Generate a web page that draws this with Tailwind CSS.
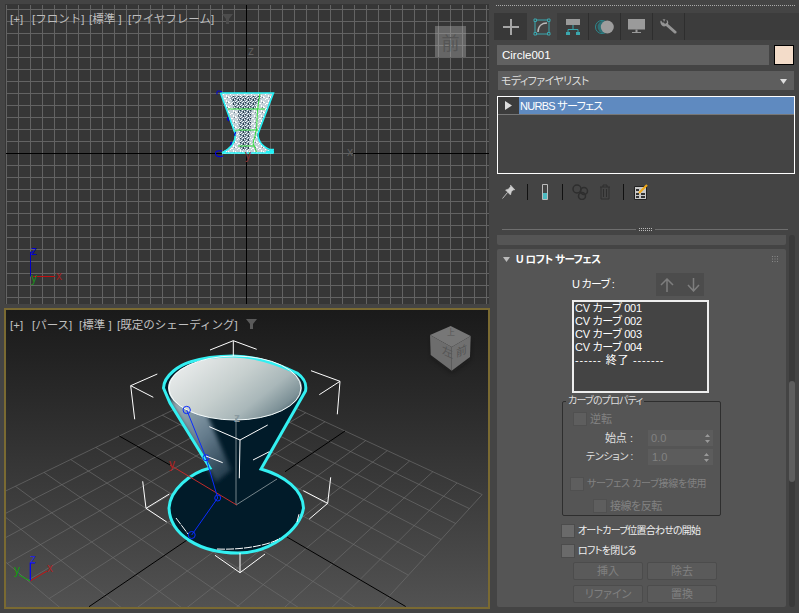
<!DOCTYPE html>
<html><head><meta charset="utf-8"><script src="https://cdn.jsdelivr.net/npm/@tailwindcss/browser@4"></script></head>
<body class="m-0 w-[799px] h-[613px] overflow-hidden bg-[#444444] font-['Liberation_Sans','Noto_Sans_CJK_JP',sans-serif] text-[11px] leading-none text-white">
<div class="flex w-[799px] h-[613px]">
  <!-- viewports -->
  <div class="w-[496px] flex flex-col pl-[4px] pt-[4px]">
    <div class="relative w-[484px] h-[300px] ml-[1px] bg-[#363636] overflow-hidden">
      <svg class="absolute inset-0" width="484" height="300" viewBox="5 4 484 300">
        <defs>
          <pattern id="g" x="6" y="9" width="12" height="12" patternUnits="userSpaceOnUse"><path d="M0 .5H12M.5 0V12" stroke="#636363" fill="none"/></pattern>
          <pattern id="n" x="222" y="94" width="7" height="5" patternUnits="userSpaceOnUse"><rect width="7" height="5" fill="#c3d0d7"/><path d="M1 0h1v1H1zM4 1h1v2H4zM0 3h1v1H0zM6 2h1v2H6zM2 4h2v1H2z" fill="#fff"/><path d="M5 3h1v1H5z" fill="#6d8090"/></pattern>
          <pattern id="d" x="236" y="94" width="5" height="4" patternUnits="userSpaceOnUse"><rect width="5" height="4" fill="#7f94a3"/><path d="M1 0h1v1H1zM3 1h1v1H3zM0 2h1v1H0zM4 3h1v1H4zM2 3h1v1H2z" fill="#f4f8fa"/><path d="M2 1h1v2H2zM4 0h1v1H4z" fill="#243848"/></pattern>
        </defs>
        <rect x="6" y="5" width="483" height="299" fill="url(#g)"/>
        <path d="M246.500 5V304M6 153.500H222M353 153.500H489" stroke="#000"/>
        <path d="M221 93H273L257 135Q259 146 273 152V154H222V152Q235 146 235 135Z" fill="url(#n)"/>
        <path d="M230 96H262L254 109H234ZM238 109H252L249 150H240Z" fill="url(#d)"/>
        <path d="M228 109H265M236.500 130H258M238 146H255M260 93L257.500 110L256.500 130L253 143L256.500 152M236 130L235 138" stroke="#22e02c" stroke-width=".9" fill="none"/>
        <path d="M220.500 93H273.500L258 134Q258 146 273.500 151M220.500 93L235 133Q237 145 222 153H274M274 151.500H266M274 149.500H269" stroke="#22f4f8" stroke-width="1.500" fill="none"/>
        <path d="M222 92Q216 89 217 94.500M222 151Q215 150 215.500 154Q217 158 223 156M228 117q-1 3 1 4M236 132q-2 2-1 4M232 142q-2 1-1 3" stroke="#0000e0" stroke-width="1.100" fill="none"/>
        <path d="M30.500 276.500V252H34" stroke="#0000c8" fill="none"/>
        <path d="M32 276.500H55" stroke="#c01010" fill="none"/>
      </svg>
      <div class="absolute left-[5px] top-[10px] flex text-[#bdbdbd] text-[11.500px] whitespace-nowrap"><span class="w-[22px]">[+]</span><span class="w-[57px]">[フロント]</span><span class="w-[39px]">[標準 ]</span><span>[ワイヤフレーム]</span></div>
      <svg class="absolute left-[216px] top-[9px]" width="13" height="12" viewBox="0 0 13 12"><path d="M1 1H12L8 6V11H5V6Z" fill="#4c4c4c"/></svg>
      <span class="absolute left-[243px] top-[41px] text-[12px] text-[#5e5e5e]">z</span>
      <span class="absolute left-[342px] top-[142px] text-[12px] text-[#5e5e5e]">x</span>
      <span class="absolute left-[240px] top-[145px] text-[12px] text-[#8a3030]">y</span>
      <span class="absolute left-[26px] top-[241px] text-[12px] text-[#0000cc]">z</span>
      <span class="absolute left-[51px] top-[266px] text-[12px] text-[#a02020]">x</span>
      <span class="absolute left-[26px] top-[268px] text-[12px] text-[#1f8a1f]">y</span>
      <div class="absolute left-[430px] top-[22px] w-[31px] h-[31px] bg-[#b0b0b0]/40 flex items-center justify-center text-[18px] text-[#555555] font-['Noto_Sans_CJK_JP']">前</div>
    </div>
    <div class="relative w-[486px] h-[301px] mt-[4px] border-2 border-[#7a6a32] bg-gradient-to-b from-[#1a1a1a] to-[#525252] overflow-hidden">
      <svg class="absolute inset-0" width="482" height="297" viewBox="6 310 482 297">
        <path id="floor" d="" stroke="#6e6e6e" stroke-opacity=".65" fill="none"/>
        <path d="M119.300 436L170 465M287 537L405.700 606.500M89 606.700L190 538M285 471.700L345 431" stroke="#000" fill="none"/>
        <defs>
          <linearGradient id="b" x1="0" x2="1" y1=".2" y2=".8"><stop offset="0" stop-color="#eceeee"/><stop offset=".45" stop-color="#c6cfce"/><stop offset=".7" stop-color="#a9b7b9"/><stop offset=".88" stop-color="#7d9197"/><stop offset="1" stop-color="#3f5a66"/></linearGradient>
          <linearGradient id="s" x1="0" x2=".7" y1="0" y2="1"><stop offset="0" stop-color="#a9bcc3"/><stop offset=".6" stop-color="#62798a"/><stop offset="1" stop-color="#2a4252"/></linearGradient>
          <filter id="f"><feGaussianBlur stdDeviation="2"/></filter>
          <clipPath id="c"><path d="M163.500 388C164 375 180 365 190 362C205 357 220 356 233 356C255 356 280 365 297 373C304 378 307 383 305.500 391L261 469C285 476 303 490 303.500 508C300 530 270 553 238 553C200 553 170 535 169 508C170 490 190 473 210 468L170 403Z"/></clipPath>
        </defs>
        <path d="M163.500 388C164 375 180 365 190 362C205 357 220 356 233 356C255 356 280 365 297 373C304 378 307 383 305.500 391L261 469C285 476 303 490 303.500 508C300 530 270 553 238 553C200 553 170 535 169 508C170 490 190 473 210 468L170 403Z" fill="#011b29"/>
        <g clip-path="url(#c)"><path d="M168 398L207 414L231 470L216 482Z" fill="url(#s)" filter="url(#f)"/></g>
        <ellipse cx="235" cy="388" rx="67" ry="32" fill="url(#b)"/>
        <path d="M163.500 388C164 375 180 365 190 362C205 357 220 356 233 356C255 356 280 365 297 373C304 378 307 383 305.500 391L261 469C285 476 303 490 303.500 508C300 530 270 553 238 553C200 553 170 535 169 508C170 490 190 473 210 468L170 403Z" fill="none" stroke="#33f0f2" stroke-width="3"/>
        <ellipse cx="235" cy="388" rx="66" ry="32" fill="none" stroke="#f4fbfb" stroke-width="1"/>
        <path d="M236 418V505L277 479" stroke="#75848a" fill="none"/>
        <path d="M236.700 505L170 465" stroke="#c02a2a" fill="none"/>
        <path d="M186.700 410L206 457.700L217.700 498L191.700 535" stroke="#0a2cff" fill="none"/>
        <circle cx="186.700" cy="410" r="3.700" fill="none" stroke="#0a2cff"/><circle cx="206" cy="457.700" r="3" fill="none" stroke="#0a2cff"/><circle cx="217.700" cy="498" r="3" fill="none" stroke="#0a2cff"/><circle cx="191.700" cy="535" r="3.500" fill="none" stroke="#0a2cff"/>
        <g stroke="#fff" fill="none" stroke-width="1">
          <path d="M210 350L233.300 340.700L256.700 349.300M233.300 340.700V356"/>
          <path d="M157.300 374L130.700 385.700L153.300 397.300M130.700 385.700L134.700 419.300"/>
          <path d="M311 370.700L340 381.300L319.300 394.700M340 381.300L337.300 414.300"/>
          <path d="M209.300 426.700L240 440L267.700 425M240 440L239.300 478.300"/>
          <path d="M253 460L269.300 451.700M206 456L222.700 462.700"/>
          <path d="M142.700 481.300L146 508.300L166.700 522M146 508.300L169.300 494"/>
          <path d="M330.700 477.300L327.700 503.300L309.300 519M327.700 503.300L303.300 490.700"/>
          <path d="M215 555.300L240 572.700L265 554M240 572.700V553"/>
          <path d="M176 518L188 534M217 549Q240 550 262 545Q275 542 280 538M297 522L299 514" stroke-dasharray="8 1"/>
        </g>
        <path d="M30.300 581V563H35" stroke="#0000ff" stroke-width="1.200" fill="none"/>
        <path d="M30.300 581L47 571" stroke="#cc1111" fill="none"/>
        <path d="M30.300 581L19 575" stroke="#11aa11" fill="none"/>
        <defs><filter id="sh"><feGaussianBlur stdDeviation="2.500"/></filter></defs>
        <path d="M431 338L452 350L471 340L470 360L452 373L432 358Z" fill="#111" opacity=".35" filter="url(#sh)"/>
        <path d="M430 335L450.700 326L470.700 336L451.700 347Z" fill="#777777"/>
        <path d="M430 335L451.700 347V370.700L430.700 355Z" fill="#6d6d6d"/>
        <path d="M470.700 336L451.700 347V370.700L470 357Z" fill="#707070"/>
      </svg>
      <div class="absolute left-[4px] top-[10px] flex text-[#c0c0c0] text-[11.500px] whitespace-nowrap"><span class="w-[22px]">[+]</span><span class="w-[47px]">[パース]</span><span class="w-[38px]">[標準 ]</span><span>[既定のシェーディング]</span></div>
      <svg class="absolute left-[239px] top-[8px]" width="13" height="12" viewBox="0 0 13 12"><path d="M1 1H12L8 6V11H5V6Z" fill="#5a5a5a"/></svg>
      <span class="absolute left-[24px] top-[243px] text-[12px] text-[#2222dd]">z</span>
      <span class="absolute left-[41px] top-[252px] text-[12px] text-[#aa2222]">x</span>
      <span class="absolute left-[8px] top-[254px] text-[12px] text-[#119911]">y</span>
      <span class="absolute left-[163px] top-[148px] text-[12px] text-[#aa2222]">y</span>
      <span class="absolute left-[228px] top-[102px] text-[12px] font-bold text-[#8a9aa0]">z</span>
      <span class="absolute left-[436px] top-[36px] text-[11px] text-[#555555] font-['Noto_Sans_CJK_JP'] skew-y-[25deg]">左</span>
      <span class="absolute left-[450px] top-[35px] text-[11px] text-[#555555] font-['Noto_Sans_CJK_JP'] skew-y-[-25deg]">前</span>
      <span class="absolute left-[441px] top-[18px] text-[8px] text-[#555555] font-['Noto_Sans_CJK_JP']">上</span>
    </div>
  </div>
  <!-- command panel -->
  <div class="w-[303px] flex flex-col [font-feature-settings:'palt']">
    <div class="h-[1px] mt-[5px] w-[299px] border-t border-dotted border-[#aaaaaa]"></div>
    <div class="flex h-[27px] mt-[7px] ml-[-2px] w-[305px] bg-[#3c3c3c]">
      <div class="w-[33px] flex items-center justify-center bg-[#383838]"><svg width="18" height="18" viewBox="0 0 18 18"><path d="M9 1V17M1 9H17" stroke="#a6a6a6" stroke-width="2"/></svg></div>
      <div class="w-[30px] flex items-center justify-center bg-[#444444]"><svg width="18" height="18" viewBox="0 0 18 18"><path d="M2 2H16V16H2Z" fill="none" stroke="#3aa7ae" stroke-width="1"/><path d="M1 1h2.500v2.500H1zM14.500 1H17v2.500h-2.500zM1 14.500h2.500V17H1zM14.500 14.500H17V17h-2.500z" fill="#444" stroke="#3aa7ae"/><path d="M5 14C5 8 9 5 14 5" stroke="#bbbbbb" stroke-width="1.500" fill="none"/></svg></div>
      <div class="w-[32px] flex items-center justify-center border-r border-[#2e2e2e]"><svg width="14" height="16" viewBox="0 0 14 16"><path d="M0 0H14V6H0Z" fill="#9a9a9a"/><path d="M7 6V10M2 14V10.500H12V14" stroke="#3aa7ae" fill="none"/><path d="M0 13H4V16H0zM10 13H14V16H10z" fill="#3aa7ae"/></svg></div>
      <div class="w-[32px] flex items-center justify-center border-r border-[#2e2e2e]"><svg width="19" height="14" viewBox="0 0 19 14"><circle cx="7" cy="7" r="6.500" fill="none" stroke="#2c8c92"/><circle cx="9" cy="7" r="6.500" fill="#2e6f74"/><circle cx="12.300" cy="7" r="6.500" fill="#9d9d9d"/></svg></div>
      <div class="w-[32px] flex items-center justify-center border-r border-[#2e2e2e]"><svg width="17" height="15" viewBox="0 0 17 15"><path d="M0 0H17V10.500H0Z" fill="#9a9a9a"/><path d="M7.500 10.500H9.500V13H7.500Z" fill="#9a9a9a"/><path d="M4 13.500H13" stroke="#9a9a9a"/></svg></div>
      <div class="w-[32px] flex items-center justify-center border-r border-[#2e2e2e]"><svg width="17" height="15" viewBox="0 0 17 15"><path d="M5.500 0.500L3.500 3L5 5L7 3.500L6.500 0.800Q9 2 8 5L16.500 12.500Q17 15 14.500 14.500L6 7Q2 8.500 0.500 4Q0 2 1 1.500L3 4L4.500 2.500L2.500 0.500Q4 -.2 5.500 .5Z" fill="#949494"/></svg></div>
    </div>
    <div class="flex mt-[5px] gap-[5px] pl-[1px]">
      <div class="w-[272px] h-[20px] bg-[#616161] flex items-center pl-[5px] pt-[1px] text-[11.500px]">Circle001</div>
      <div class="w-[20px] h-[20px] bg-[#f3dcc9] border border-black"></div>
    </div>
    <div class="w-[296px] h-[19px] ml-[2px] mt-[6px] bg-[#5e5e5e] flex items-center justify-between pl-[3px] pr-[7px] pt-[1px] text-[#dddddd]"><span class="tracking-[-0.600px]">モディファイヤリスト</span><svg width="7" height="5" viewBox="0 0 7 5"><path d="M0 0H7L3.500 5Z" fill="#dddddd"/></svg></div>
    <div class="w-[298px] h-[78px] ml-[1px] mt-[6px] border border-white bg-[#444444]">
      <div class="flex h-[18px] border-b border-[#777777]"><div class="w-[21px] bg-[#3c3c3c] flex items-center justify-center"><svg width="7" height="9" viewBox="0 0 7 9"><path d="M0 0L7 4.500L0 9Z" fill="#dddddd"/></svg></div><div class="flex-1 bg-[#5f8ac0] flex items-center pl-[1px] pt-[1px] tracking-[-0.700px]">NURBS サーフェス</div></div>
    </div>
    <div class="flex items-center h-[17px] mt-[9px] pl-[6px]">
      <svg width="14" height="15" viewBox="0 0 14 15"><path d="M0.500 14.500L5.500 8.500" stroke="#bbbbbb"/><path d="M3.500 6L8.500 11L9.500 7.500L12 5.500L13 6L8.500 1L8.500 2.500L6.500 5Z" fill="#cfcfcf" stroke="#cfcfcf" stroke-width=".5"/></svg>
      <div class="w-[1px] h-[16px] bg-[#111111] ml-[11px]"></div>
      <svg class="ml-[13px]" width="8" height="16" viewBox="0 0 8 16"><path d="M1.500 .5H6.500V15.500H1.500Z" fill="none" stroke="#bdbdbd"/><path d="M2 9H6V15H2Z" fill="#4dbac0"/></svg>
      <div class="w-[1px] h-[16px] bg-[#111111] ml-[13px]"></div>
      <svg class="ml-[9px]" width="17" height="16" viewBox="0 0 17 16"><circle cx="5" cy="5" r="4" fill="none" stroke="#2e2e2e" stroke-width="1.500"/><circle cx="12" cy="7" r="3.500" fill="none" stroke="#2e2e2e" stroke-width="1.500"/><circle cx="10" cy="12" r="3.500" fill="none" stroke="#2e2e2e" stroke-width="1.500"/></svg>
      <svg class="ml-[10px]" width="12" height="16" viewBox="0 0 12 16"><path d="M1 3H11M4 3V1H8V3M2 3V15H10V3M4.500 5V13M7.500 5V13" stroke="#2e2e2e" fill="none"/></svg>
      <div class="w-[1px] h-[16px] bg-[#111111] ml-[12px]"></div>
      <svg class="ml-[10px]" width="15" height="16" viewBox="0 0 15 16"><path d="M.5 2.500H12.500V15.500H.5Z" fill="#c8c8c8" stroke="#222222"/><path d="M2 5H5V7H2ZM2 9H5V11H2ZM7 9H11V11H7ZM2 12H5V14H2ZM7 12H11V14H7Z" fill="#333333"/><path d="M5 9L13 1" stroke="#f0a818" stroke-width="2.200"/></svg>
    </div>
    <div class="flex items-center h-[4px] mt-[27px] pl-[6px]"><div class="w-[134px] h-[1px] bg-[#6e6e6e]"></div><div class="w-[13px] mx-[3px] border-t border-b border-dotted border-[#bbbbbb] h-[3px]"></div><div class="w-[133px] h-[1px] bg-[#6e6e6e]"></div></div>
    <div class="flex flex-1 mt-[4px] pr-[4px] gap-[3px] mb-[6px]">
      <div class="w-[289px] ml-[1px] flex flex-col gap-[4px]">
        <div class="h-[10px] bg-[#555555] rounded-b-[2px]"></div>
        <div class="flex-1 bg-[#555555] rounded-[2px] relative flex flex-col items-start">
          <div class="flex items-center h-[20px] w-full pl-[6px] font-bold text-[10.500px] tracking-[-0.500px]">
            <svg class="mr-[6px]" width="7" height="5" viewBox="0 0 7 5"><path d="M0 0H7L3.500 5Z" fill="#bbbbbb"/></svg>U ロフト サーフェス
            <svg class="ml-auto mr-[8px]" width="6" height="6" viewBox="0 0 6 6"><path d="M0 0h1v1H0zM2.500 0h1v1h-1zM5 0h1v1H5zM0 2.500h1v1H0zM2.500 2.500h1v1h-1zM5 2.500h1v1H5zM0 5h1v1H0zM2.500 5h1v1h-1zM5 5h1v1H5z" fill="#888888"/></svg>
          </div>
          <div class="flex items-center ml-[75px] mt-[4px]">
            <span class="w-[84px] text-[11px] tracking-[-0.700px]">U カーブ :</span>
            <div class="w-[48px] h-[23px] bg-[#4c4c4c] flex items-center justify-between px-[4px]">
              <svg width="14" height="14" viewBox="0 0 14 14"><path d="M7 14V1M1 7L7 1L13 7" stroke="#7e7e7e" stroke-width="1.500" fill="none"/></svg>
              <svg width="13" height="14" viewBox="0 0 13 14"><path d="M6.500 0V13M1 7L6.500 13L12 7" stroke="#7e7e7e" stroke-width="1.500" fill="none"/></svg>
            </div>
          </div>
          <div class="w-[137px] h-[93px] ml-[75px] mt-[4px] border-2 border-[#eeeeee] bg-[#444444] pl-[1px] text-[11px] leading-[13px] tracking-[-0.300px]">
            <div>CV カーブ 001</div><div>CV カーブ 002</div><div>CV カーブ 003</div><div>CV カーブ 004</div><div class="tracking-[0.800px]">------ 終了 -------</div>
          </div>
          <div class="relative w-[159px] h-[115px] ml-[65px] mt-[8px] border border-[#2e2e2e] rounded-[2px] text-[#828282] whitespace-nowrap">
            <span class="absolute left-[3px] top-[-6px] bg-[#555555] px-[2px] text-[#dddddd] text-[10px] tracking-[-0.800px]">カーブのプロパティ</span>
            <div class="flex items-center absolute left-[10px] top-[10px]"><div class="w-[14px] h-[14px] bg-[#5e5e5e] border border-[#505050] mr-[3px]"></div>逆転</div>
            <div class="flex items-center absolute right-[7px] top-[28px]"><span class="text-[#e0e0e0] mr-[15px]">始点 :</span><div class="w-[65px] h-[16px] bg-[#5c5c5c] flex items-center justify-between px-[3px]">0.0<svg width="5" height="9" viewBox="0 0 5 9"><path d="M2.500 0L5 3H0ZM2.500 9L5 6H0Z" fill="#999999"/></svg></div></div>
            <div class="flex items-center absolute right-[7px] top-[47px]"><span class="text-[#e0e0e0] mr-[15px] text-[10px] tracking-[-0.300px]">テンション :</span><div class="w-[65px] h-[16px] bg-[#5c5c5c] flex items-center justify-between px-[4px]">1.0<svg width="5" height="9" viewBox="0 0 5 9"><path d="M2.500 0L5 3H0ZM2.500 9L5 6H0Z" fill="#999999"/></svg></div></div>
            <div class="flex items-center absolute left-[7px] top-[75px]"><div class="w-[14px] h-[14px] bg-[#5e5e5e] border border-[#505050] mr-[3px]"></div><span class="text-[10px] tracking-[-0.300px]">サーフェス カーブ接線を使用</span></div>
            <div class="flex items-center absolute left-[30px] top-[97px]"><div class="w-[14px] h-[14px] bg-[#5e5e5e] border border-[#505050] mr-[3px]"></div><span class="tracking-[-0.500px]">接線を反転</span></div>
          </div>
          <div class="flex items-center ml-[64px] mt-[8px] text-[#eeeeee]"><div class="w-[14px] h-[14px] bg-[#6a6a6a] border border-[#4c4c4c] mr-[3px]"></div><span class="text-[10px] tracking-[-0.800px]">オートカーブ位置合わせの開始</span></div>
          <div class="flex items-center ml-[64px] mt-[6px] text-[#eeeeee]"><div class="w-[14px] h-[14px] bg-[#6a6a6a] border border-[#4c4c4c] mr-[3px]"></div><span class="text-[10px] tracking-[-0.700px]">ロフトを閉じる</span></div>
          <div class="grid grid-cols-[70px_70px] gap-x-[4px] gap-y-[5px] ml-[76px] mt-[4px] text-[#808080]">
            <div class="h-[18px] bg-[#5a5a5a] border border-[#4c4c4c] rounded-[2px] flex items-center justify-center">挿入</div>
            <div class="h-[18px] bg-[#5a5a5a] border border-[#4c4c4c] rounded-[2px] flex items-center justify-center">除去</div>
            <div class="h-[18px] bg-[#5a5a5a] border border-[#4c4c4c] rounded-[2px] flex items-center justify-center">リファイン</div>
            <div class="h-[18px] bg-[#5a5a5a] border border-[#4c4c4c] rounded-[2px] flex items-center justify-center">置換</div>
          </div>
        </div>
      </div>
      <div class="w-[6px] bg-[#3a3a3a] rounded-[3px] relative"><div class="absolute left-0 w-[6px] top-[146px] h-[101px] bg-[#5e5e5e] rounded-[3px]"></div></div>
    </div>
  </div>
</div>
<script>
(function(){
  var x0=119.3,y0=436,x1=236.7,y1=505,x2=345,y2=431,x3=235,y3=380;
  var dx1=x1-x2,dx2=x3-x2,sx=x0-x1+x2-x3,dy1=y1-y2,dy2=y3-y2,sy=y0-y1+y2-y3;
  var den=dx1*dy2-dx2*dy1,g=(sx*dy2-dx2*sy)/den,h=(dx1*sy-sx*dy1)/den;
  var a=x1-x0+g*x1,b=x3-x0+h*x3,d=y1-y0+g*y1,e=y3-y0+h*y3;
  function p(s,t){var w=g*s+h*t+1;return ((a*s+b*t+x0)/w).toFixed(1)+' '+((d*s+e*t+y0)/w).toFixed(1);}
  var out='',k;
  for(k=-6;k<=6;k++){ if(k!==0){ out+='M'+p(0,k/6)+'L'+p(2,k/6); } }
  for(k=0;k<=12;k++){ if(k!==6){ out+='M'+p(k/6,-1)+'L'+p(k/6,1); } }
  document.getElementById('floor').setAttribute('d',out);
})();
</script>
</body></html>
